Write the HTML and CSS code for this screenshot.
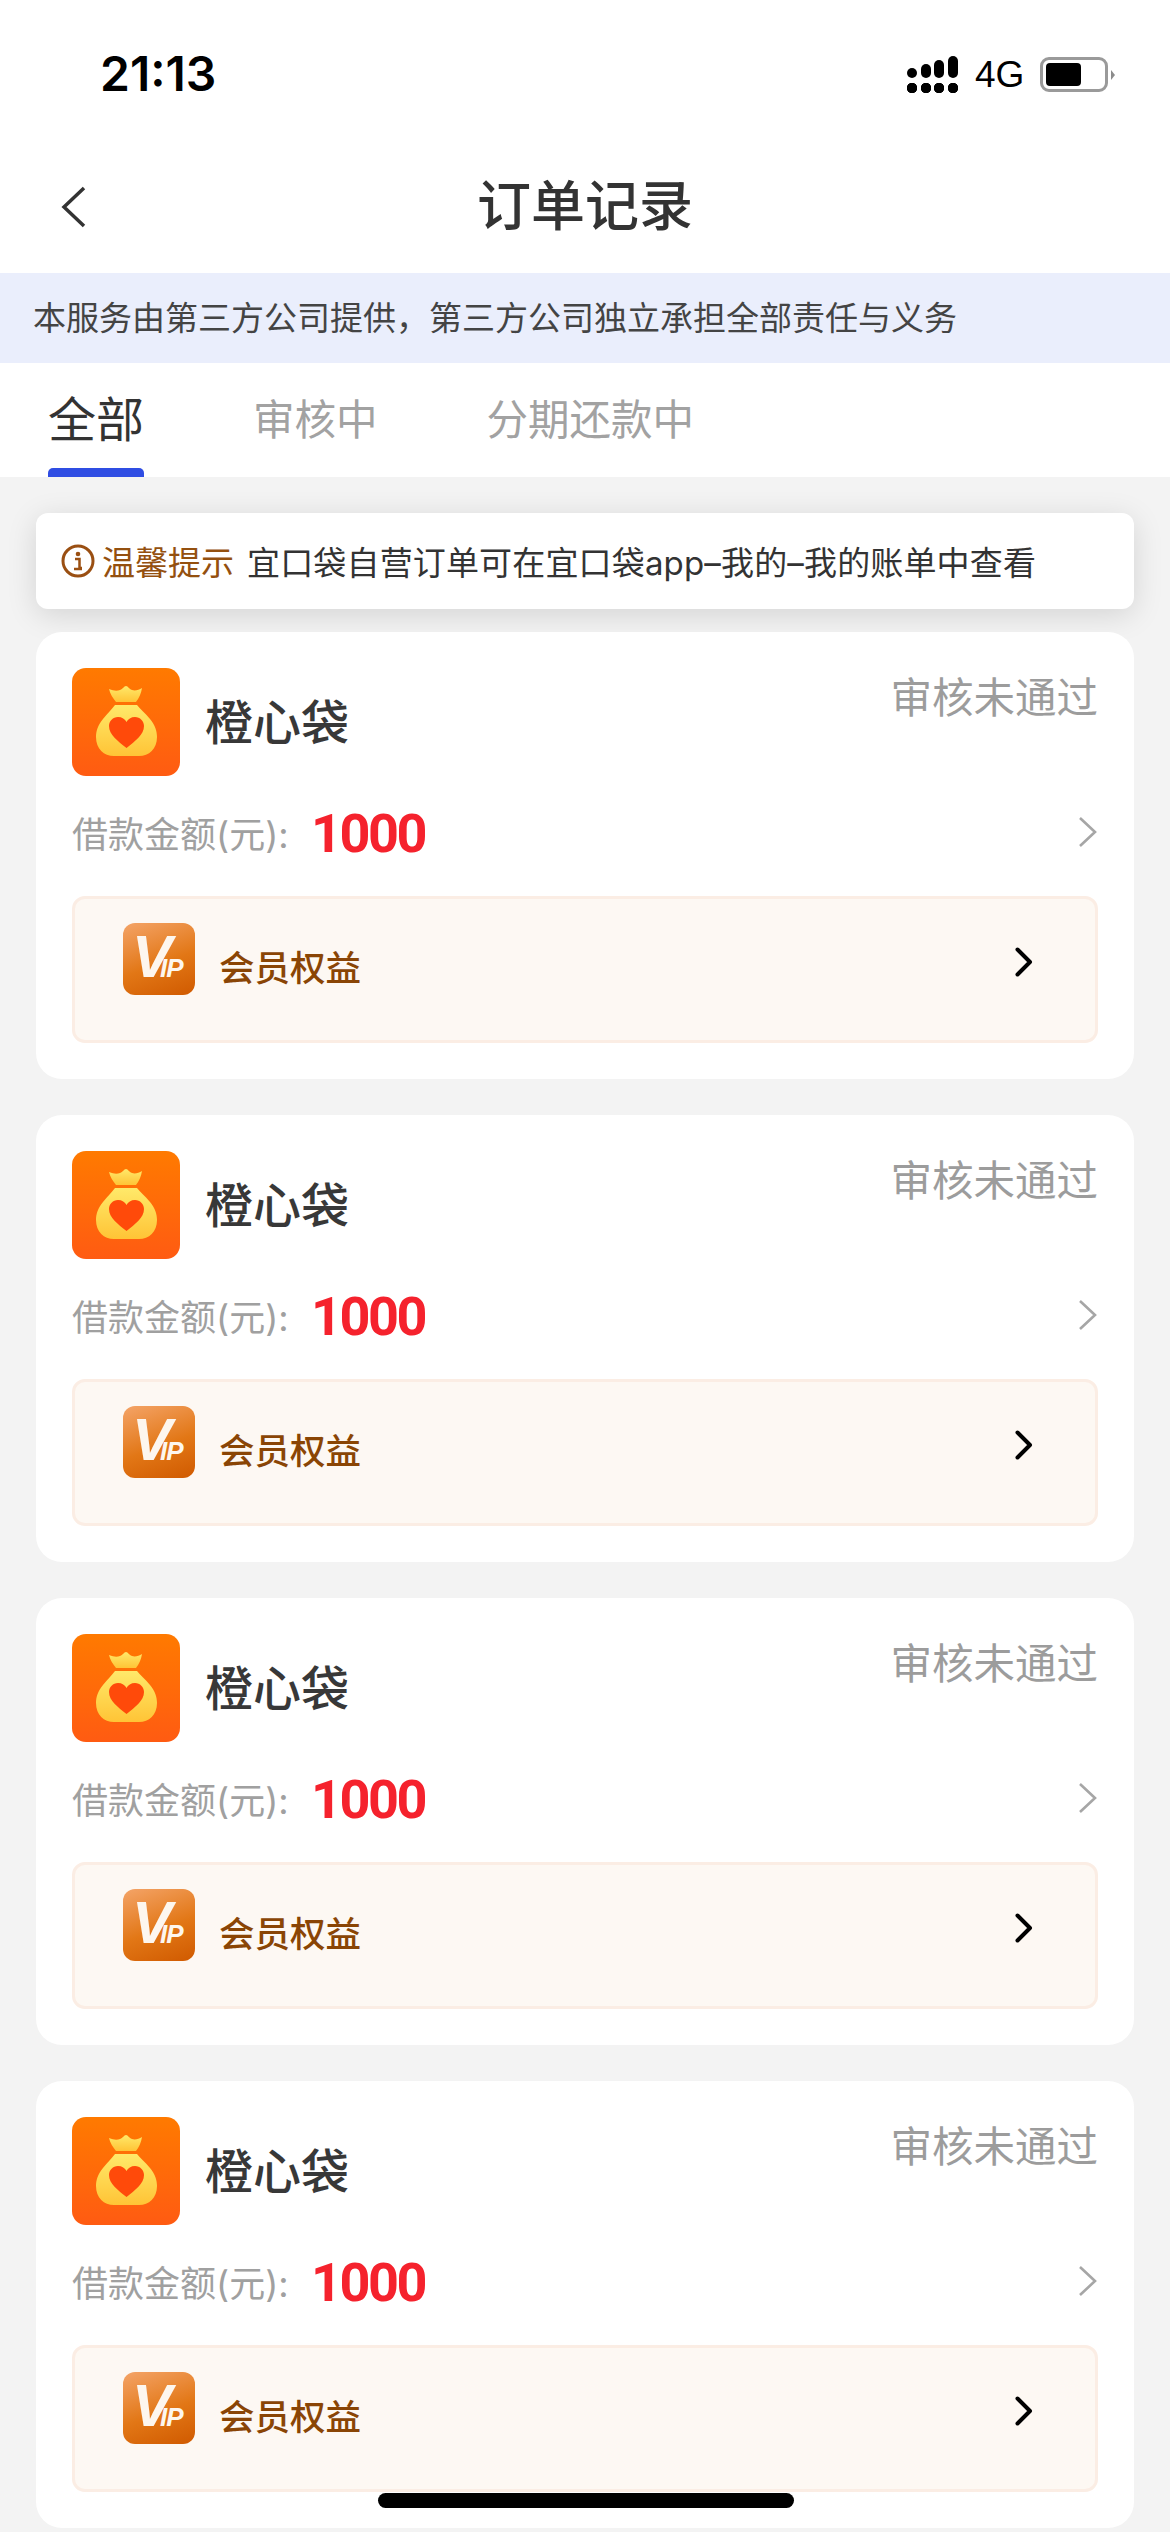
FILE: index.html
```html
<!DOCTYPE html>
<html lang="zh-CN">
<head>
  <meta charset="UTF-8">
  <meta name="viewport" content="width=device-width, initial-scale=1.0">
  <title>订单记录</title>
  <link rel="stylesheet" href="styles.css">
</head>
<body>
  <!-- 共用图标 -->
  <svg class="defs" width="0" height="0">
    <defs>
      <linearGradient id="logoBg" x1="0" y1="0" x2="0" y2="1">
        <stop offset="0" stop-color="#FF7A00"/>
        <stop offset="1" stop-color="#FF5B12"/>
      </linearGradient>
      <linearGradient id="bagFill" x1="0" y1="0" x2="0" y2="1">
        <stop offset="0" stop-color="#FFE96A"/>
        <stop offset="1" stop-color="#FFC436"/>
      </linearGradient>
      <symbol id="bagLogo" viewBox="0 0 108 108">
        <rect width="108" height="108" rx="14" fill="url(#logoBg)"/>
        <path d="M37 21c5 2 8 2 11 1 3-1 4-4 6-4s3 3 6 4c3 1 7 0 10-2-1 6-3 10-6 14H44c-3-4-6-8-7-13z" fill="url(#bagFill)"/>
        <path d="M43 37h22c3 4 8 8 13 14 5 6 7 12 7 18 0 12-8 19-18 19H42c-10 0-18-7-18-19 0-6 2-12 7-18 5-6 9-10 12-14z" fill="url(#bagFill)"/>
        <path d="M54.500 80C46 73 37 67 37 58c0-5 4-9 9-9 4 0 7 2 8.500 5 1.500-3 4.500-5 8.500-5 5 0 9 4 9 9 0 9-9 15-17.500 22z" fill="#FF4A0A"/>
      </symbol>
      <symbol id="chevGray" viewBox="0 0 20 32">
        <path d="M2 2l15 14L2 30" fill="none" stroke="#A6A6A6" stroke-width="2.600"/>
      </symbol>
      <symbol id="chevBlack" viewBox="0 0 18 30">
        <path d="M2.500 2.500L15 15 2.500 27.500" fill="none" stroke="#000" stroke-width="4" stroke-linecap="round" stroke-linejoin="round"/>
      </symbol>
    </defs>
  </svg>

  <div class="status-bar">
    <span class="time">21:13</span>
    <div class="status-right">
      <div class="signal">
        <i class="s1"></i><i class="s2"></i><i class="s3"></i><i class="s4"></i>
      </div>
      <span class="net">4G</span>
      <div class="battery"><div class="battery-level"></div></div>
      <div class="battery-nub"></div>
    </div>
  </div>

  <div class="nav-bar">
    <svg class="back" viewBox="0 0 26 42"><path d="M23 2L3 21l20 19" fill="none" stroke="#333" stroke-width="3.500"/></svg>
    <div class="nav-title">订单记录</div>
  </div>

  <div class="notice">本服务由第三方公司提供，第三方公司独立承担全部责任与义务</div>

  <div class="tabs">
    <div class="tab active">全部</div>
    <div class="tab">审核中</div>
    <div class="tab">分期还款中</div>
  </div>

  <div class="content">
    <div class="tip">
      <svg class="tip-icon" viewBox="0 0 34 34">
        <circle cx="17" cy="17" r="15" fill="none" stroke="#9A4F12" stroke-width="3"/>
        <circle cx="17" cy="10" r="2.300" fill="#9A4F12"/>
        <path d="M14 15h4.500v9H21M13 25h8" fill="none" stroke="#9A4F12" stroke-width="2.500"/>
      </svg>
      <span class="tip-label">温馨提示</span>
      <span class="tip-text">宜口袋自营订单可在宜口袋app–我的–我的账单中查看</span>
    </div>

    <div class="card">
      <div class="card-head">
        <svg class="logo"><use href="#bagLogo"/></svg>
        <span class="name">橙心袋</span>
        <span class="status">审核未通过</span>
      </div>
      <div class="amount-row">
        <span class="amount-label">借款金额(元):</span>
        <span class="amount">1000</span>
        <svg class="chev-gray"><use href="#chevGray"/></svg>
      </div>
      <div class="vip-row">
        <div class="vip-logo"><span class="vip-v">V</span><span class="vip-ip">IP</span></div>
        <span class="vip-text">会员权益</span>
        <svg class="chev-black"><use href="#chevBlack"/></svg>
      </div>
    </div>

    <div class="card">
      <div class="card-head">
        <svg class="logo"><use href="#bagLogo"/></svg>
        <span class="name">橙心袋</span>
        <span class="status">审核未通过</span>
      </div>
      <div class="amount-row">
        <span class="amount-label">借款金额(元):</span>
        <span class="amount">1000</span>
        <svg class="chev-gray"><use href="#chevGray"/></svg>
      </div>
      <div class="vip-row">
        <div class="vip-logo"><span class="vip-v">V</span><span class="vip-ip">IP</span></div>
        <span class="vip-text">会员权益</span>
        <svg class="chev-black"><use href="#chevBlack"/></svg>
      </div>
    </div>

    <div class="card">
      <div class="card-head">
        <svg class="logo"><use href="#bagLogo"/></svg>
        <span class="name">橙心袋</span>
        <span class="status">审核未通过</span>
      </div>
      <div class="amount-row">
        <span class="amount-label">借款金额(元):</span>
        <span class="amount">1000</span>
        <svg class="chev-gray"><use href="#chevGray"/></svg>
      </div>
      <div class="vip-row">
        <div class="vip-logo"><span class="vip-v">V</span><span class="vip-ip">IP</span></div>
        <span class="vip-text">会员权益</span>
        <svg class="chev-black"><use href="#chevBlack"/></svg>
      </div>
    </div>

    <div class="card">
      <div class="card-head">
        <svg class="logo"><use href="#bagLogo"/></svg>
        <span class="name">橙心袋</span>
        <span class="status">审核未通过</span>
      </div>
      <div class="amount-row">
        <span class="amount-label">借款金额(元):</span>
        <span class="amount">1000</span>
        <svg class="chev-gray"><use href="#chevGray"/></svg>
      </div>
      <div class="vip-row">
        <div class="vip-logo"><span class="vip-v">V</span><span class="vip-ip">IP</span></div>
        <span class="vip-text">会员权益</span>
        <svg class="chev-black"><use href="#chevBlack"/></svg>
      </div>
    </div>
  </div>

  <div class="home-bar"></div>
</body>
</html>
```

FILE: styles.css
```css
html, body {
  margin: 0;
  padding: 0;
}
body {
  width: 1170px;
  height: 2532px;
  overflow: hidden;
  position: relative;
  background-color: #F3F3F3;
  color: #333;
  font-family: Inter, "Noto Sans CJK SC", sans-serif;
}
.defs {
  position: absolute;
}

/* 状态栏 */
.status-bar {
  height: 132px;
  box-sizing: border-box;
  padding: 50px 55px 0 100px;
  display: flex;
  justify-content: space-between;
  align-items: flex-start;
  background: #fff;
}
.time {
  font-size: 48px;
  line-height: 48px;
  font-weight: 600;
  color: #000;
}
.status-right {
  display: flex;
  align-items: center;
  height: 37px;
  margin-top: 6px;
}
.signal {
  width: 51px;
  height: 37px;
  display: flex;
  justify-content: space-between;
  align-items: stretch;
  margin-right: 17px;
}
.signal i {
  width: 10px;
  display: block;
  background:
    radial-gradient(circle at 5px 5px, #000 5px, transparent 5.500px) bottom / 10px 10px no-repeat;
  position: relative;
}
.signal i::before {
  content: "";
  position: absolute;
  left: 0;
  width: 10px;
  bottom: 15px;
  background: #000;
  border-radius: 5px;
}
.signal .s1::before { height: 10px; }
.signal .s2::before { height: 14px; }
.signal .s3::before { height: 18px; }
.signal .s4::before { height: 22px; }
.net {
  font-family: "Liberation Sans", sans-serif;
  font-size: 37px;
  line-height: 37px;
  color: #000;
  width: 49px;
  margin-right: 16px;
}
.battery {
  width: 68px;
  height: 35px;
  box-sizing: border-box;
  border: 3px solid #9A9A9A;
  border-radius: 9px;
  padding: 3px;
}
.battery-level {
  width: 35px;
  height: 23px;
  background: #000;
  border-radius: 4px;
}
.battery-nub {
  width: 0;
  height: 0;
  margin-left: 3px;
  border-left: 4px solid #8C8C8C;
  border-top: 5px solid transparent;
  border-bottom: 5px solid transparent;
}

/* 导航栏 */
.nav-bar {
  height: 141px;
  box-sizing: border-box;
  padding-top: 9px;
  background: #fff;
  display: flex;
  align-items: center;
  justify-content: center;
  position: relative;
}
.back {
  position: absolute;
  left: 61px;
  top: 54px;
  width: 26px;
  height: 42px;
}
.nav-title {
  font-size: 54px;
  font-weight: 500;
  line-height: 72px;
  color: #333;
}

.notice {
  height: 90px;
  background: #EAEEFC;
  padding-left: 33px;
  font-size: 33px;
  line-height: 90px;
  color: #444;
}

/* tab */
.tabs {
  height: 114px;
  background: #fff;
  display: flex;
  padding-left: 48px;
  gap: 109px;
}
.tab {
  position: relative;
  font-size: 41.500px;
  line-height: 115px;
  color: #A2A2A2;
}
.tab.active {
  font-size: 48px;
  color: #333;
  line-height: 113px;
}
.tab.active::after {
  content: "";
  position: absolute;
  left: 0;
  right: 0;
  bottom: 0;
  height: 9px;
  background: #2F4DE3;
  border-radius: 5px 5px 0 0;
}

.content {
  padding: 36px 36px 0;
  display: flex;
  flex-direction: column;
  gap: 36px;
}

/* 温馨提示 */
.tip {
  height: 96px;
  margin-bottom: -13px;
  background: #fff;
  border-radius: 12px;
  box-shadow: 0 6px 30px rgba(0, 0, 0, 0.13);
  display: flex;
  align-items: center;
  padding-left: 25px;
  font-size: 33px;
  position: relative;
  z-index: 1;
}
.tip-icon {
  width: 34px;
  height: 34px;
  margin-right: 7px;
}
.tip-label {
  color: #94500F;
  margin-right: 13px;
}
.tip-text {
  color: #333;
  letter-spacing: 0.160px;
}

/* 订单卡片 */
.card {
  height: 447px;
  box-sizing: border-box;
  background: #fff;
  border-radius: 26px;
  padding: 36px 36px 0;
  position: relative;
  z-index: 2;
}
.card-head {
  height: 108px;
  display: flex;
  align-items: center;
}
.logo {
  width: 108px;
  height: 108px;
  flex: none;
}
.name {
  margin: 0 0 7px 25px;
  font-size: 48px;
  font-weight: 500;
  color: #383838;
  flex: 1;
}
.status {
  align-self: flex-start;
  font-size: 41.500px;
  line-height: 60px;
  color: #9C9C9C;
}
.amount-row {
  height: 64px;
  margin-top: 24px;
  display: flex;
  align-items: center;
}
.amount-label {
  font-size: 36px;
  color: #A0A0A0;
  width: 239px;
}
.amount {
  font-family: Roboto, sans-serif;
  font-size: 54px;
  font-weight: 700;
  letter-spacing: -2.500px;
  line-height: 64px;
  padding-top: 4px;
  color: #F5222D;
  flex: 1;
}
.chev-gray {
  width: 20px;
  height: 32px;
}
.vip-row {
  height: 147px;
  box-sizing: border-box;
  margin-top: 32px;
  padding: 24px 48px 0 48px;
  background: #FDF8F3;
  border: 3px solid #FBEDE4;
  border-radius: 13px;
  display: flex;
  align-items: flex-start;
}
.vip-logo {
  width: 72px;
  height: 72px;
  box-sizing: border-box;
  padding: 0 0 0 9px;
  flex: none;
  border-radius: 12px;
  background: linear-gradient(160deg, #F4A468, #E27716 55%, #D05A00);
  display: flex;
  align-items: baseline;
  font-family: "Liberation Sans", sans-serif;
  font-weight: 700;
  font-style: italic;
  color: #FDF6EE;
  line-height: 68px;
}
.vip-v {
  font-size: 60px;
  font-weight: 700;
  letter-spacing: -12px;
}
.vip-ip {
  font-size: 26px;
  letter-spacing: -1px;
}
.vip-text {
  margin: 22px 0 0 24px;
  font-size: 35.500px;
  line-height: 48px;
  font-weight: 500;
  color: #8A4505;
  flex: 1;
}
.chev-black {
  width: 18px;
  height: 30px;
  margin-top: 24px;
  margin-right: 14px;
}

.home-bar {
  position: absolute;
  left: 378px;
  top: 2493px;
  width: 416px;
  height: 15px;
  background: #000;
  border-radius: 8px;
  z-index: 3;
}
```
